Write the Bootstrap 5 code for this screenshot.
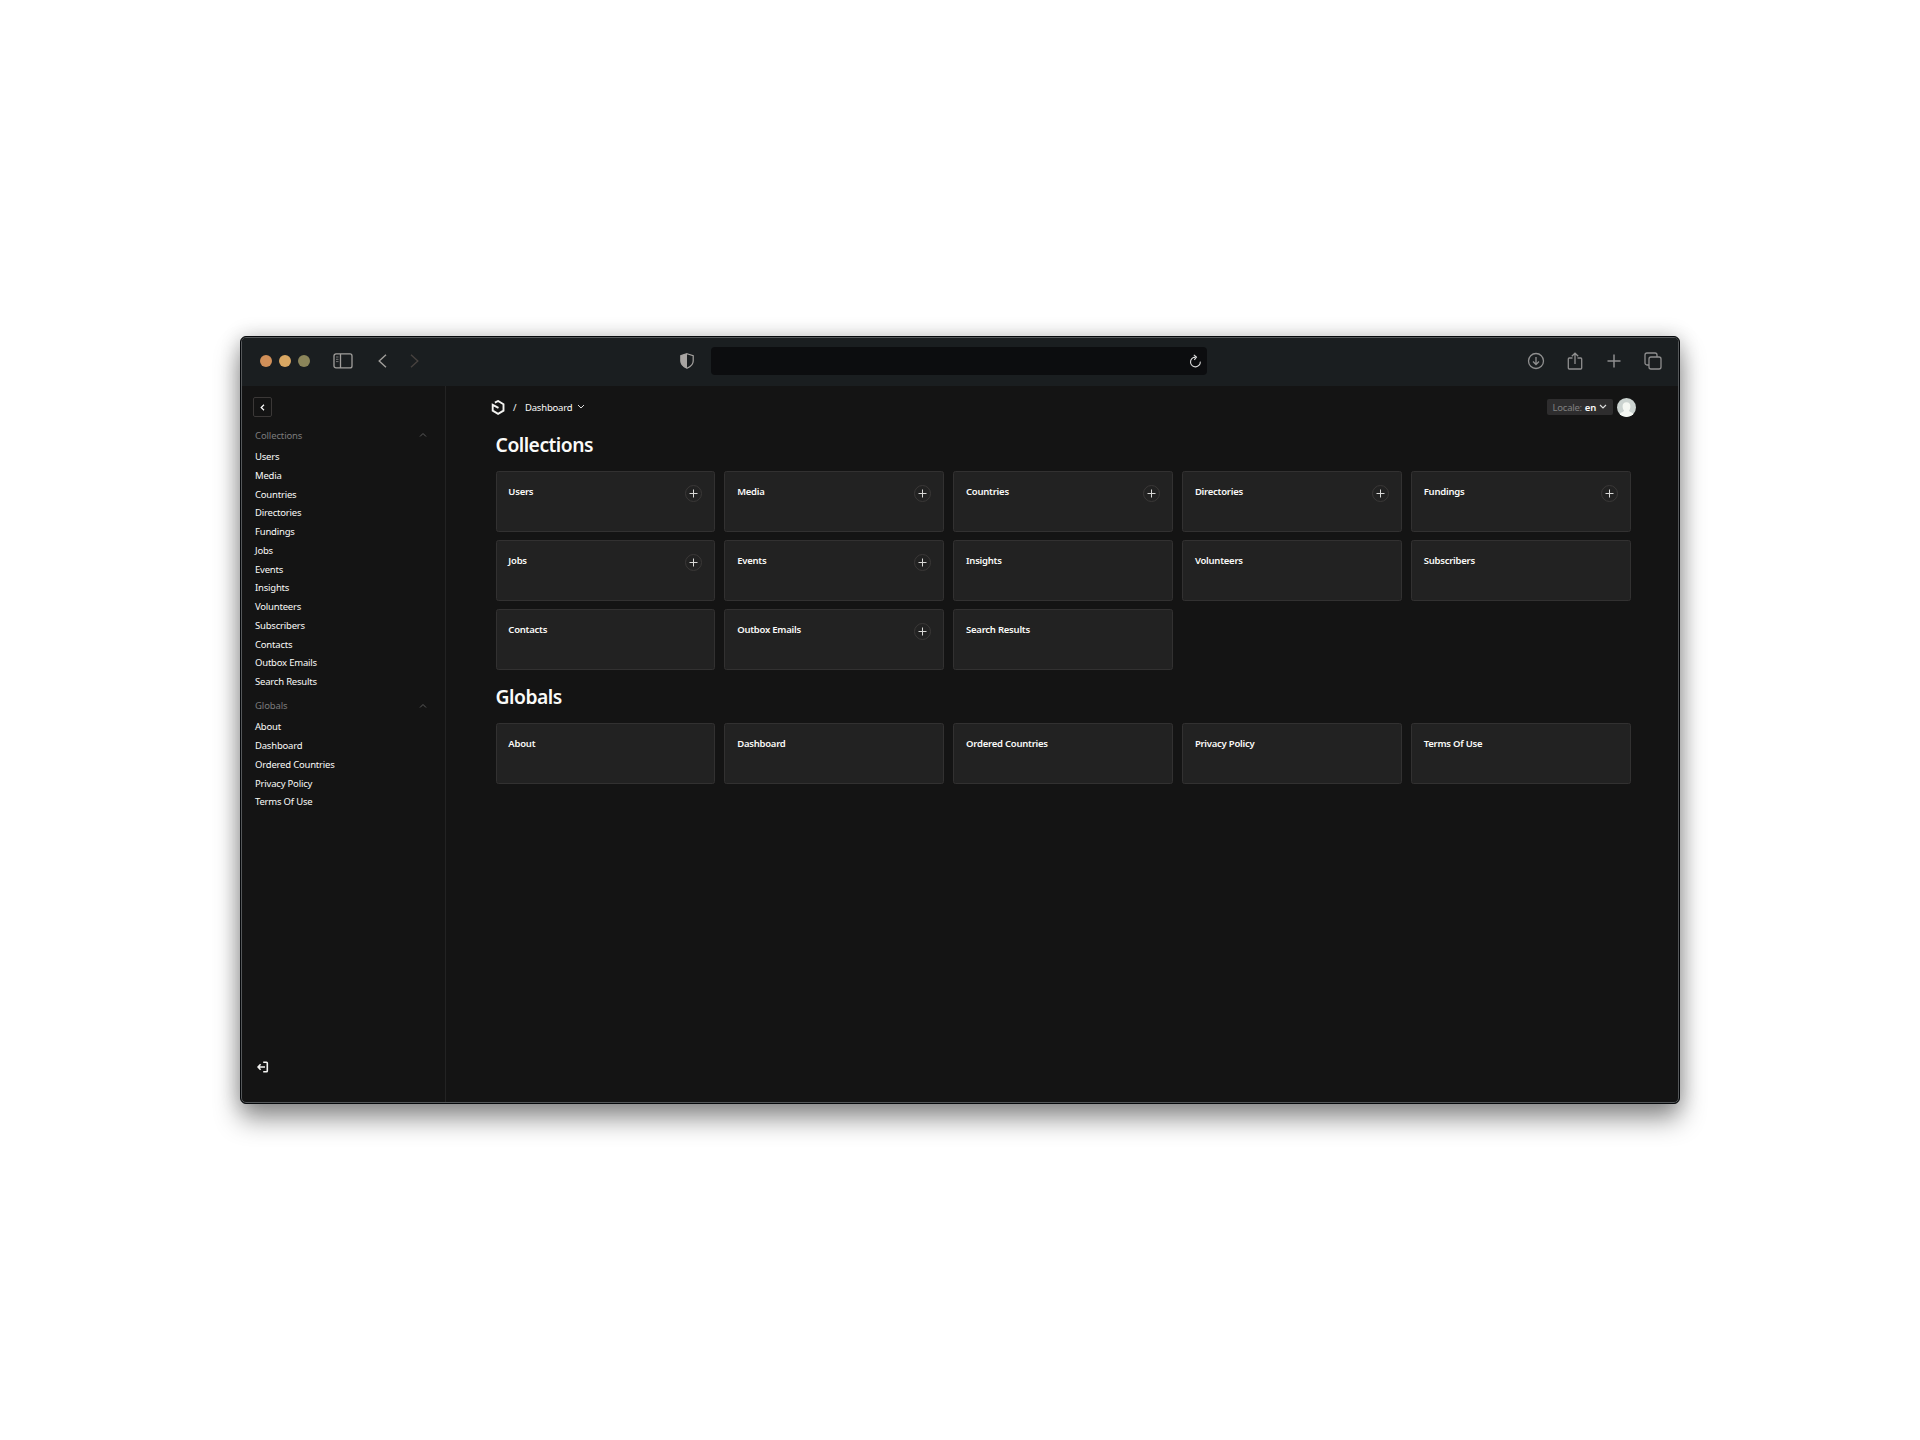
<!DOCTYPE html>
<html lang="en" data-bs-theme="dark">
<head>
<meta charset="utf-8">
<meta name="viewport" content="width=device-width, initial-scale=1">
<title>Dashboard</title>
<link href="https://cdn.jsdelivr.net/npm/bootstrap@5.3.0/dist/css/bootstrap.min.css" rel="stylesheet">
<style>
body{background:#fff;font-family:"Noto Sans","Open Sans",sans-serif;font-size:9.5px;line-height:18.75px;color:#fafaf8;height:1440px;overflow:hidden}
svg{display:block;flex:none}
.stage{padding:336px 240px 0}
.window{height:768px;border:1px solid #05080b;border-radius:6px;background:#141414;box-shadow:0 15px 26px rgba(0,0,0,.42),0 0 20px rgba(0,0,0,.2);overflow:hidden}
.window-inner{height:766px;border:1px solid #55585a;border-radius:5px;overflow:hidden}
.titlebar{height:48px;background:#1a1e20;padding:0 16px 3px 17.5px;color:#8f8f8f}
.dot{width:12px;height:12px;border-radius:50%;margin-right:7px}
.dot-close{background:#d08f58}
.dot-min{background:#d9a762}
.dot-max{background:#8b855a}
.icon-panel{margin-left:16px}
.icon-back{margin-left:25.500px}
.icon-next{margin-left:23px}
.icon-shield{margin-left:261px}
.address{width:496px;height:28px;border-radius:4px;background:#0c0d0f;color:#dcdcdc;padding-right:5px;margin-left:17px}
.tools{gap:21px;margin-left:auto}
.side{width:204px;border-right:1px solid #232323;padding:11px 18px 0 11px}
.collapse-btn{width:19px;height:20px;border:1px solid #3b3837;border-radius:2px;color:#fff}
.side nav{padding-top:8.6px}
.group-label{color:#7c7c7c;letter-spacing:-.12px;padding-left:2px;height:21.5px}
.group-label svg{margin-top:-2px}
.group-label + a{margin-top:1px}
.group-next{margin-top:4px}
.side a{color:#fafaf8;display:block;height:18.75px;padding-left:2px;letter-spacing:-.2px}
.logout{padding:0 0 29.500px 4px}
.main{padding:0 47.200px 0 49.600px}
.topbar{height:20px;margin:11px -4.800px 0 -4.600px}
.slash{margin-left:8px;width:12px;padding-top:2px}
.crumb{letter-spacing:-.2px;padding-top:2px}
.crumb-arrow{margin-left:5px}
.locale{width:66.500px;height:16px;background:#2e2d2e;border-radius:2px;padding:0 6px;line-height:17px;letter-spacing:-.25px}
.locale span{color:#808080}
.locale b{margin-left:3px}
.avatar{width:19px;height:19px;border-radius:50%;overflow:hidden;margin-left:3.500px}
h2.section-title{font-size:19.3px;font-weight:600;line-height:26px;margin:15px 0 13px;color:#fafaf8;letter-spacing:-.52px}
.tiles + h2.section-title{margin-top:14.250px}
.tiles{display:grid;grid-template-columns:repeat(5,1fr);gap:8.25px 9px}
.tile{height:60.75px;border:1px solid #323131;border-radius:2.5px;background:#222;padding:10.800px 12.200px 0 11.750px;font-weight:600;line-height:17px;letter-spacing:-.24px}
.add{width:17px;height:17px;border:1px solid #3a3837;border-radius:50%;color:#d8d8d6;margin-top:1.900px}
</style>
<script src="https://cdn.jsdelivr.net/npm/bootstrap@5.3.0/dist/js/bootstrap.bundle.min.js"></script>
</head>
<body>
<div class="stage">
<div class="window"><div class="window-inner d-flex flex-column">
  <header class="titlebar d-flex align-items-center">
    <i class="dot dot-close"></i><i class="dot dot-min"></i><i class="dot dot-max"></i>
    <svg class="icon-panel" width="20" height="16" viewBox="0 0 20 16" fill="none" stroke="#a09e9b" stroke-width="1.3"><rect x="1" y=".9" width="18" height="14" rx="2"/><path d="M7.5 1v14"/><path d="M3 4h2.5M3 6.3h2.5M3 8.6h2.5" stroke-width="1" stroke="#777"/></svg>
    <svg class="icon-back" width="9" height="14" viewBox="0 0 9 14" fill="none" stroke="#a09e9b" stroke-width="1.4"><path d="M8 .8 1.2 7 8 13.2"/></svg>
    <svg class="icon-next" width="9" height="14" viewBox="0 0 9 14" fill="none" stroke="#47423f" stroke-width="1.4"><path d="M1 .8 7.8 7 1 13.2"/></svg>
    <svg class="icon-shield" width="14" height="16" viewBox="0 0 14 16"><path d="M7 .7 13.2 2.600V8c0 3.500-2.600 5.700-6.200 7.300C3.400 13.700.8 11.500.8 8V2.600z" fill="none" stroke="#a8a5a2" stroke-width="1.200"/><path d="M7 .7V15.300C3.400 13.700.8 11.500.8 8V2.600z" fill="#a8a5a2"/></svg>
    <div class="address d-flex align-items-center justify-content-end"><svg width="13" height="14" viewBox="0 0 13 14" fill="none" stroke="currentColor" stroke-width="1.100"><path d="M6.300 3.100A4.900 4.900 0 1 0 11.300 7.600M4.800.8 7.500 3.100 5.300 5.900"/></svg></div>
    <div class="d-flex align-items-center tools">
      <svg width="18" height="18" viewBox="0 0 18 18" fill="none" stroke="currentColor" stroke-width="1.300"><circle cx="9" cy="9" r="7.500"/><path d="M9 5v7.500M6 9.500l3 3 3-3"/></svg>
      <svg width="18" height="18" viewBox="0 0 18 18" fill="none" stroke="currentColor" stroke-width="1.300"><path d="M6.500 6H3.300a1 1 0 0 0-1 1v9a1 1 0 0 0 1 1h11.400a1 1 0 0 0 1-1V7a1 1 0 0 0-1-1h-3.200M9 12V1.300M5.800 4.300 9 1.200l3.200 3.100"/></svg>
      <svg width="18" height="18" viewBox="0 0 18 18" fill="none" stroke="currentColor" stroke-width="1.500"><path d="M9 2.500v13M2.500 9h13"/></svg>
      <svg width="18" height="18" viewBox="0 0 18 18" fill="none" stroke="currentColor" stroke-width="1.300"><rect x="5" y="5" width="12" height="12" rx="2"/><path d="M5 13H3a2 2 0 0 1-2-2V3a2 2 0 0 1 2-2h8a2 2 0 0 1 2 2v2"/></svg>
    </div>
  </header>
  <div class="d-flex flex-grow-1">
    <aside class="side d-flex flex-column flex-shrink-0">
      <div class="collapse-btn d-flex align-items-center justify-content-center"><svg width="5" height="7" viewBox="0 0 5 7" fill="none" stroke="currentColor" stroke-width="1.200"><path d="M4 .8 1.200 3.500 4 6.200"/></svg></div>
      <nav id="nav"></nav>
      <div class="logout mt-auto"><svg width="12" height="12" viewBox="0 0 12 12" fill="none" stroke="#f3f3f1" stroke-width="1.600"><path d="M6.200 1.200h3.300a.8.8 0 0 1 .8.800v8a.8.8 0 0 1-.8.800H6.200"/><path d="M8 6H1.200M3.600 3.300 1 6l2.600 2.700"/></svg></div>
    </aside>
    <main class="main flex-grow-1">
      <div class="topbar d-flex align-items-center">
        <svg width="14" height="15" viewBox="0 0 14 15" fill="none" stroke="#f3f3f1" stroke-width="1.900"><path d="M3.900 2.700 7.100 1l5.400 3.200v6.400L7.100 13.800 1.700 10.600V4.800L7.500 7.800"/></svg>
        <span class="slash">/</span><span class="crumb">Dashboard</span>
        <svg class="crumb-arrow" width="8" height="6" viewBox="0 0 8 6" fill="none" stroke="#ddd"><path d="M1 1l3 3 3-3"/></svg>
        <div class="locale d-flex align-items-center ms-auto"><span>Locale:</span><b class="fw-semibold">en</b><svg class="ms-auto" width="8" height="6" viewBox="0 0 8 6" fill="none" stroke="#ddd" stroke-width="1.200"><path d="M1 1l3 3 3-3"/></svg></div>
        <svg class="avatar" viewBox="0 0 19 19"><rect width="19" height="19" fill="#cbd3d0"/><path d="M9.500 4.200c-2.800 0-4 2-3.900 4.200 0 2 .8 3.300 1.500 4.200-.2 1.200-2.300 1.600-4.100 3V19h13v-3.400c-1.800-1.400-3.900-1.800-4.100-3 .7-.9 1.500-2.200 1.500-4.200.1-2.200-1.100-4.200-3.900-4.200z" fill="#f4f7f2"/></svg>
      </div>
      <h2 class="section-title">Collections</h2>
      <div class="tiles" id="collections"></div>
      <h2 class="section-title">Globals</h2>
      <div class="tiles" id="globals"></div>
    </main>
  </div>
</div></div>
</div>
<script>
const cols=['Users','Media','Countries','Directories','Fundings','Jobs','Events','Insights','Volunteers','Subscribers','Contacts','Outbox Emails','Search Results'];
const globs=['About','Dashboard','Ordered Countries','Privacy Policy','Terms Of Use'];
const creatable=new Set(['Users','Media','Countries','Directories','Fundings','Jobs','Events','Outbox Emails']);
const group=(name,items,cls)=>`<div class="group-label d-flex align-items-center justify-content-between ${cls}"><span>${name}</span><svg width="8" height="6" viewBox="0 0 8 6" fill="none" stroke="#5a5a5a"><path d="M1 4.500l3-3 3 3"/></svg></div>`+items.map(t=>`<a class="text-decoration-none" href="#">${t}</a>`).join('');
const plus='<div class="add d-flex align-items-center justify-content-center"><svg width="9" height="9" viewBox="0 0 9 9" fill="none" stroke="currentColor" stroke-width="1"><path d="M4.500 .5v8M.5 4.500h8"/></svg></div>';
const tile=t=>`<div class="tile d-flex align-items-start justify-content-between"><span>${t}</span>${creatable.has(t)?plus:''}</div>`;
document.getElementById('nav').innerHTML=group('Collections',cols,'')+group('Globals',globs,'group-next');
document.getElementById('collections').innerHTML=cols.map(tile).join('');
document.getElementById('globals').innerHTML=globs.map(tile).join('');
</script>
</body>
</html>
